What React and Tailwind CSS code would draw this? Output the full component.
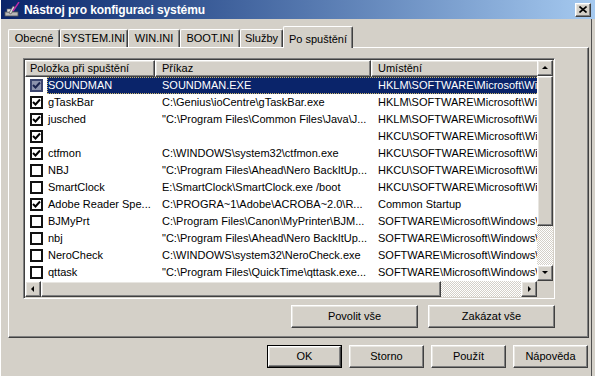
import React from 'react';

const rows = [
  { name: 'SOUNDMAN', cmd: 'SOUNDMAN.EXE', loc: 'HKLM\\SOFTWARE\\Microsoft\\Windows\\CurrentVersion\\Run', on: true, sel: true },
  { name: 'gTaskBar', cmd: 'C:\\Genius\\ioCentre\\gTaskBar.exe', loc: 'HKLM\\SOFTWARE\\Microsoft\\Windows\\CurrentVersion\\Run', on: true },
  { name: 'jusched', cmd: '"C:\\Program Files\\Common Files\\Java\\J...', loc: 'HKLM\\SOFTWARE\\Microsoft\\Windows\\CurrentVersion\\Run', on: true },
  { name: '', cmd: '', loc: 'HKCU\\SOFTWARE\\Microsoft\\Windows\\CurrentVersion\\Run', on: true },
  { name: 'ctfmon', cmd: 'C:\\WINDOWS\\system32\\ctfmon.exe', loc: 'HKCU\\SOFTWARE\\Microsoft\\Windows\\CurrentVersion\\Run', on: true },
  { name: 'NBJ', cmd: '"C:\\Program Files\\Ahead\\Nero BackItUp...', loc: 'HKCU\\SOFTWARE\\Microsoft\\Windows\\CurrentVersion\\Run', on: false },
  { name: 'SmartClock', cmd: 'E:\\SmartClock\\SmartClock.exe /boot', loc: 'HKCU\\SOFTWARE\\Microsoft\\Windows\\CurrentVersion\\Run', on: false },
  { name: 'Adobe Reader Spe...', cmd: 'C:\\PROGRA~1\\Adobe\\ACROBA~2.0\\R...', loc: 'Common Startup', on: true },
  { name: 'BJMyPrt', cmd: 'C:\\Program Files\\Canon\\MyPrinter\\BJM...', loc: 'SOFTWARE\\Microsoft\\Windows\\CurrentVersion\\Run', on: false },
  { name: 'nbj', cmd: '"C:\\Program Files\\Ahead\\Nero BackItUp...', loc: 'SOFTWARE\\Microsoft\\Windows\\CurrentVersion\\Run', on: false },
  { name: 'NeroCheck', cmd: 'C:\\WINDOWS\\system32\\NeroCheck.exe', loc: 'SOFTWARE\\Microsoft\\Windows\\CurrentVersion\\Run', on: false },
  { name: 'qttask', cmd: '"C:\\Program Files\\QuickTime\\qttask.exe...', loc: 'SOFTWARE\\Microsoft\\Windows\\CurrentVersion\\Run', on: false },
];

const tabs = [
  { label: 'Obecné', w: 'w-[52px]' },
  { label: 'SYSTEM.INI', w: 'w-[68px]' },
  { label: 'WIN.INI', w: 'w-[52px]' },
  { label: 'BOOT.INI', w: 'w-[60px]' },
  { label: 'Služby', w: 'w-[43px]' },
];

const raised =
  'border border-t-white border-l-white border-r-[#404040] border-b-[#404040] shadow-[inset_-1px_-1px_#808080,inset_1px_1px_#e8e6e1]';

function Arrow({ dir }) {
  const pts = {
    up: '1,5 4,2 7,5',
    down: '1,2 4,5 7,2',
    left: '5,1 2,4 5,7',
    right: '3,1 6,4 3,7',
  };
  return (
    <svg width="8" height="8" viewBox="0 0 8 8">
      <polygon points={pts[dir]} fill="#000" />
    </svg>
  );
}

function ScrollBtn({ dir }) {
  return (
    <div className={`w-[16px] h-[16px] shrink-0 bg-[#d4d0c8] flex items-center justify-center ${raised}`}>
      <Arrow dir={dir} />
    </div>
  );
}

function Check({ on, sel }) {
  return (
    <div
      className={`w-[13px] h-[13px] border-2 flex items-center justify-center ${
        sel ? 'bg-[#8c93ad] border-[#3c4670]' : 'bg-white border-[#111]'
      }`}
    >
      {on && (
        <svg width="9" height="9" viewBox="0 0 9 9">
          <polyline points="1,4 3.5,6.5 8,1.5" fill="none" stroke={sel ? '#1c2550' : '#000'} strokeWidth="2" />
        </svg>
      )}
    </div>
  );
}

function Btn({ children, w = 'w-[75px]', def }) {
  return (
    <div className={def ? 'border border-black' : ''}>
      <div className={`${def ? 'w-[73px] h-[21px]' : `${w} h-[23px]`} bg-[#d4d0c8] flex items-center justify-center ${raised}`}>
        {children}
      </div>
    </div>
  );
}

export default function App() {
  return (
    <div className="w-[595px] h-[376px] bg-[#d4d0c8] flex flex-col overflow-hidden font-['Liberation_Sans',Arial,sans-serif] text-[11px] text-black border-l border-l-white shadow-[inset_-3px_0_#d4d0c8,inset_-4px_0_#505050]">
      {/* title bar */}
      <div className="h-[19px] shrink-0 bg-gradient-to-r from-[#0a246a] to-[#a6caf0] flex items-center pl-[3px] pr-[4px]">
        <svg width="17" height="16" viewBox="0 0 17 16" className="shrink-0">
          <rect x="1" y="10" width="13" height="4" fill="#b8b8b8" stroke="#555" strokeWidth="0.8" />
          <rect x="3" y="7" width="5" height="3" fill="#e0e0e0" stroke="#666" strokeWidth="0.6" />
          <path d="M5 11 L9 4 L11 5 L7 12 Z" fill="#d8d8d8" stroke="#444" strokeWidth="0.6" />
          <line x1="9" y1="9" x2="15" y2="0" stroke="#c02aa8" strokeWidth="1.4" />
        </svg>
        <span className="ml-[3px] text-white font-bold text-[12px] tracking-[-0.1px]">Nástroj pro konfiguraci systému</span>
        <div className="flex-1" />
        <div className={`w-[16px] h-[14px] bg-[#d4d0c8] flex items-center justify-center ${raised}`}>
          <svg width="8" height="7" viewBox="0 0 8 7">
            <path d="M0.5 0.5 L7.5 6.5 M7.5 0.5 L0.5 6.5" stroke="#000" strokeWidth="1.6" />
          </svg>
        </div>
      </div>

      {/* tabs */}
      <div className="h-[28px] shrink-0 flex items-end pl-[7px]">
        {tabs.map((t) => (
          <div
            key={t.label}
            className={`${t.w} h-[18px] flex items-center justify-center border-t border-l border-r border-t-white border-l-white border-r-[#404040] shadow-[inset_-1px_0_#808080] rounded-t-[2px]`}
          >
            {t.label}
          </div>
        ))}
        <div className="w-[70px] h-[22px] -mb-px z-10 bg-[#d4d0c8] flex items-start pt-[4px] justify-center border-t border-l border-r border-t-white border-l-white border-r-[#404040] shadow-[inset_-1px_0_#808080] rounded-t-[2px]">
          Po spuštění
        </div>
      </div>

      {/* panel */}
      <div className="ml-[7px] w-[581px] h-[291px] shrink-0 border border-t-white border-l-white border-r-[#404040] border-b-[#404040] shadow-[inset_-1px_-1px_#808080] pl-[14px] pt-[10px]">
        {/* list view */}
        <div className="w-[532px] h-[241px] border border-t-[#808080] border-l-[#808080] border-r-white border-b-white shadow-[inset_1px_1px_#404040,inset_-1px_-1px_#d4d0c8] p-px flex flex-col bg-white">
          <div className="flex flex-1 min-h-0">
            <div className="w-[512px] flex flex-col overflow-hidden">
              <div className="h-[17px] shrink-0 flex bg-[#d4d0c8]">
                <div className={`w-[130px] shrink-0 pl-[4px] flex items-center ${raised}`}>Položka při spuštění</div>
                <div className={`w-[216px] shrink-0 pl-[6px] flex items-center ${raised}`}>Příkaz</div>
                <div className={`w-[180px] shrink-0 pl-[6px] flex items-center ${raised}`}>Umístění</div>
              </div>
              {rows.map((r, i) => (
                <div key={i} className="h-[17px] shrink-0 flex items-center whitespace-nowrap">
                  <div className="w-[22px] shrink-0 pl-[5px] flex items-center">
                    <Check on={r.on} sel={r.sel} />
                  </div>
                  <div
                    className={`flex flex-1 h-full items-center ${
                      r.sel ? 'bg-[#0a246a] text-white outline outline-1 outline-dotted outline-[#c8b46a] -outline-offset-1' : ''
                    }`}
                  >
                    <div className="w-[108px] shrink-0 pl-px overflow-hidden">{r.name}</div>
                    <div className="w-[216px] shrink-0 pl-[7px] overflow-hidden">{r.cmd}</div>
                    <div className="flex-1 pl-[7px] overflow-hidden">{r.loc}</div>
                  </div>
                </div>
              ))}
            </div>
            {/* vertical scrollbar */}
            <div className="w-[16px] flex flex-col shrink-0">
              <ScrollBtn dir="up" />
              <div className={`h-[150px] shrink-0 bg-[#d4d0c8] ${raised}`} />
              <div className="flex-1 bg-[repeating-conic-gradient(#d4d0c8_0%_25%,#ffffff_0%_50%)] bg-[length:2px_2px]" />
              <ScrollBtn dir="down" />
            </div>
          </div>
          {/* horizontal scrollbar */}
          <div className="h-[16px] shrink-0 flex">
            <ScrollBtn dir="left" />
            <div className={`w-[400px] shrink-0 bg-[#d4d0c8] ${raised}`} />
            <div className="w-[80px] shrink-0 bg-[repeating-conic-gradient(#d4d0c8_0%_25%,#ffffff_0%_50%)] bg-[length:2px_2px]" />
            <ScrollBtn dir="right" />
            <div className="w-[16px] bg-[#d4d0c8]" />
          </div>
        </div>

        <div className="w-[532px] mt-[6px] flex justify-end gap-[10px]">
          <Btn w="w-[127px]">Povolit vše</Btn>
          <Btn w="w-[127px]">Zakázat vše</Btn>
        </div>
      </div>

      {/* bottom buttons */}
      <div className="mt-[7px] w-[587px] flex justify-end gap-[7px]">
        <Btn def>OK</Btn>
        <Btn>Storno</Btn>
        <Btn>Použít</Btn>
        <Btn>Nápověda</Btn>
      </div>
    </div>
  );
}
